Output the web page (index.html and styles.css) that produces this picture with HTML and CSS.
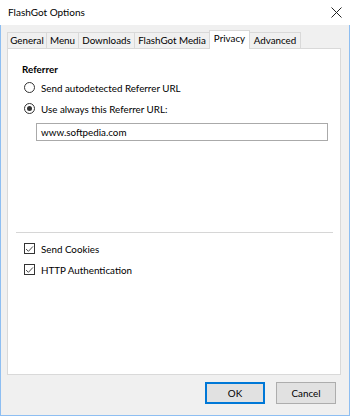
FILE: index.html
```html
<!DOCTYPE html>
<html>
<head>
<meta charset="utf-8">
<link rel="stylesheet" href="styles.css">
</head>
<body>
<div class="window">
  <div class="titlebar">
    <span class="title">FlashGot Options</span>
    <svg class="close" width="11" height="11" viewBox="0 0 11 11"><path d="M0.5 0.5L10.5 10.5M10.5 0.5L0.5 10.5" stroke="#222" stroke-width="1" fill="none"/></svg>
  </div>
  <div class="client">
    <div class="tabs">
      <div class="tab t1">General</div>
      <div class="tab t2">Menu</div>
      <div class="tab t3">Downloads</div>
      <div class="tab t4">FlashGot Media</div>
      <div class="tab t5 active">Privacy</div>
      <div class="tab t6">Advanced</div>
    </div>
    <div class="panel">
      <div class="heading">Referrer</div>
      <label class="opt"><span class="radio"></span>Send autodetected Referrer URL</label>
      <label class="opt"><span class="radio on"></span>Use always this Referrer URL:</label>
      <div class="input">www.softpedia.com</div>
      <div class="spacer"></div>
      <div class="sep"></div>
      <label class="opt chk"><span class="check"><svg width="10" height="10" viewBox="0 0 10 10"><path d="M1.2 5L3.8 7.6L8.8 2.2" stroke="#333" stroke-width="1" fill="none"/></svg></span>Send Cookies</label>
      <label class="opt chk"><span class="check"><svg width="10" height="10" viewBox="0 0 10 10"><path d="M1.2 5L3.8 7.6L8.8 2.2" stroke="#333" stroke-width="1" fill="none"/></svg></span>HTTP Authentication</label>
    </div>
    <div class="buttons">
      <div class="btn default">OK</div>
      <div class="btn">Cancel</div>
    </div>
  </div>
</div>
</body>
</html>
```
FILE: styles.css
```css
* { box-sizing: border-box; }
html, body { margin: 0; padding: 0; }
body {
  width: 350px; height: 416px; overflow: hidden;
  font-family: Lato, "Noto Sans", sans-serif;
  font-size: 9.8px; color: #000;
  background: #fff;
}
.window {
  width: 350px; height: 416px;
  display: flex; flex-direction: column;
}
.titlebar {
  height: 25px; background: #fff;
  display: flex; align-items: center; justify-content: space-between;
  padding: 0 8px 1px 8px;
}
.title { font-size: 10px; color: #000; }
.client {
  flex: 1;
  background: #f0f0f0;
  border-left: 1px solid #8dbef2;
  border-right: 1px solid #8dbef2;
  border-bottom: 1px solid #8dbef2;
  padding: 6px 8px 0 6px;
  display: flex; flex-direction: column;
}
.tabs {
  display: flex; align-items: flex-end;
  height: 17px;
  position: relative; z-index: 1;
}
.tab {
  height: 16px;
  border: 1px solid #d9d9d9; border-bottom: none;
  margin-left: -1px;
  line-height: 15px;
  text-align: center;
  background: #f0f0f0;
  white-space: nowrap;
}
.tab:first-child { margin-left: 0; }
.t1 { width: 40px; }
.t2 { width: 33px; }
.t3 { width: 57px; }
.t4 { width: 76px; }
.t5 { width: 41px; }
.t6 { width: 52px; }
.tab.active {
  height: 19px; background: #fff;
  line-height: 15px;
  margin-bottom: -1px;
  position: relative; z-index: 2;
}
.panel {
  height: 327px;
  background: #fff;
  border: 1px solid #d9d9d9;
  padding: 13px 7px 0 14px;
  display: flex; flex-direction: column;
}
.heading { font-weight: bold; height: 15px; line-height: 15px; }
.opt {
  display: flex; align-items: center;
  height: 21px;
  padding-left: 2px;
}
.radio {
  width: 11px; height: 11px; border: 1px solid #333; border-radius: 50%;
  margin-right: 6px; display: inline-flex; align-items: center; justify-content: center;
  background: #fff;
}
.radio.on::after {
  content: ""; width: 5px; height: 5px; border-radius: 50%; background: #333;
}
.input {
  margin: 4px 5px 0 14px;
  height: 18px;
  border: 1px solid #aaa;
  padding: 0 4px;
  line-height: 16px;
}
.spacer { height: 91px; }
.sep { height: 1px; background: #d6d6d6; margin: 0 0 5px -6px; }
.check {
  width: 11px; height: 11px; border: 1px solid #333;
  margin-right: 6px; display: inline-flex; align-items: center; justify-content: center;
  background: #fff;
}
.buttons {
  display: flex; justify-content: flex-end; gap: 11px;
  padding-top: 7px; padding-right: 5px;
}
.btn {
  width: 60px; height: 22px;
  background: #e1e1e1; border: 1px solid #adadad;
  display: flex; align-items: center; justify-content: center;
}
.btn.default { border: 2px solid #0078d7; }
```
